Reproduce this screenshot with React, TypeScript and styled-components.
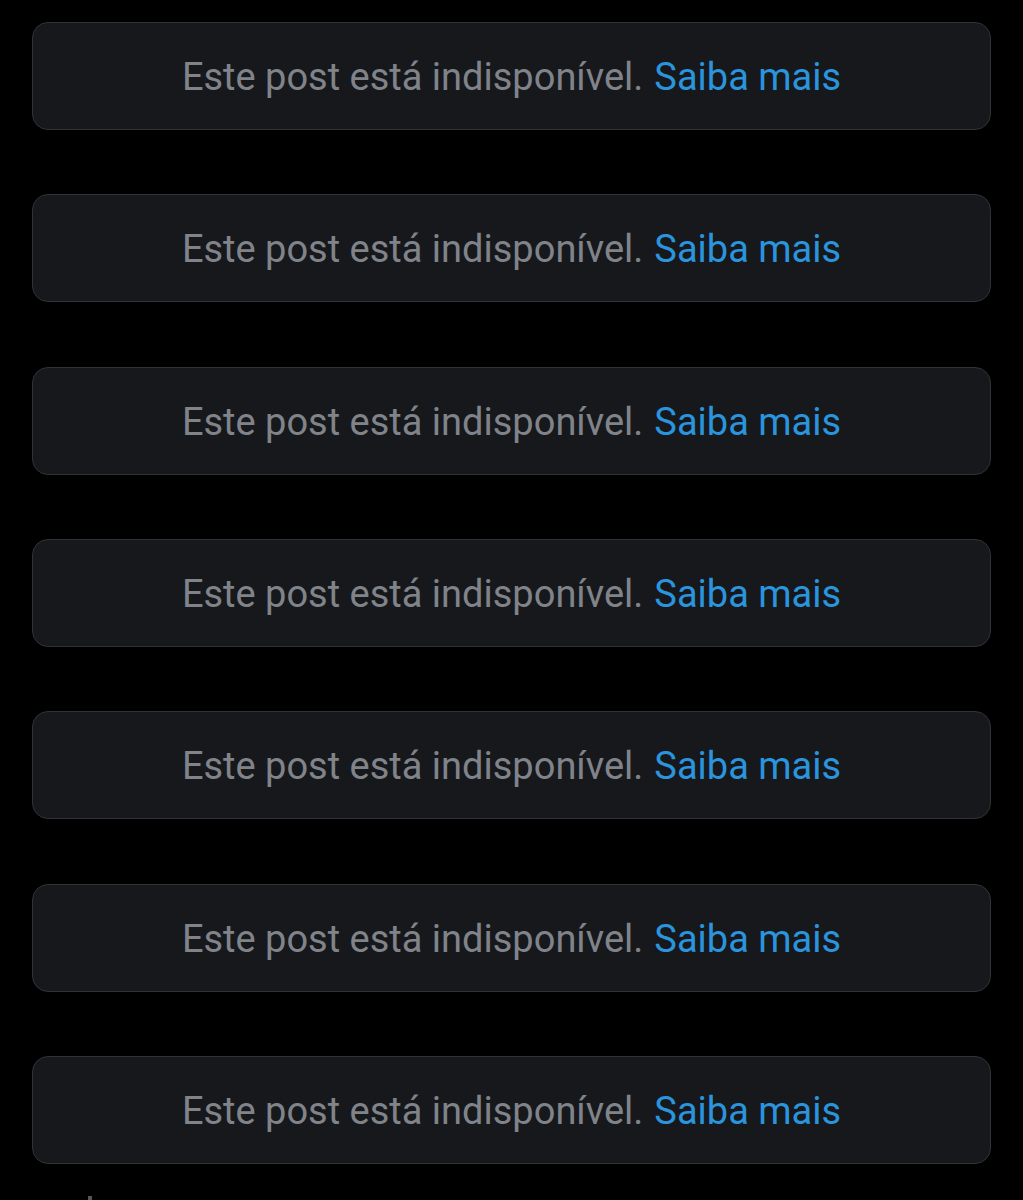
import React from 'react';
import styled, { createGlobalStyle } from 'styled-components';

const GlobalStyle = createGlobalStyle`
  html, body {
    margin: 0;
    padding: 0;
    background: #000;
  }
  body {
    font-family: Roboto, "Noto Sans", sans-serif;
  }
`;

const Feed = styled.div`
  display: flex;
  flex-direction: column;
  gap: 64.33px;
  padding: 22px 32px 0 32px;
  height: 1200px;
  box-sizing: border-box;
  overflow: hidden;
`;

const Notice = styled.div`
  flex: none;
  height: 108px;
  box-sizing: border-box;
  border: 1px solid #2f3336;
  border-radius: 16px;
  background: #16181c;
  display: flex;
  align-items: center;
  justify-content: center;
  padding-top: 2px;
  font-size: 38px;
  color: #80848a;
`;

const Link = styled.a`
  color: #2a94dd;
  text-decoration: none;
  margin-left: 11px;
  cursor: pointer;
`;

const Tick = styled.div`
  flex: none;
  width: 4px;
  height: 6px;
  margin-left: 56px;
  margin-top: -32px;
  background: #555;
`;

const App = () => {
  const posts = [1, 2, 3, 4, 5, 6, 7];
  return (
    <>
      <GlobalStyle />
      <Feed>
        {posts.map((id) => (
          <Notice key={id}>
            Este post está indisponível.
            <Link>Saiba mais</Link>
          </Notice>
        ))}
        <Tick />
      </Feed>
    </>
  );
};

export default App;
